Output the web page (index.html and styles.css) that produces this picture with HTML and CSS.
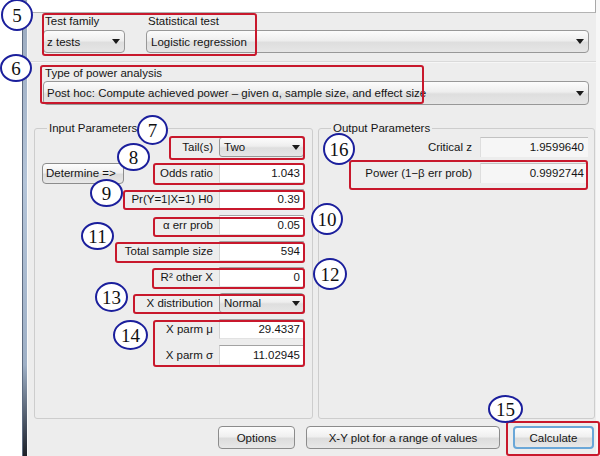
FILE: index.html
```html
<!DOCTYPE html>
<html>
<head>
<meta charset="utf-8">
<link rel="stylesheet" href="styles.css">
</head>
<body>
<div class="screen">
  <div class="gutter"></div>
  <div class="frame"></div>
  <div class="main">
    <div class="topband"></div>
    <div class="panel panel-a">
      <div class="col col-family">
        <div class="lbl">Test family</div>
        <div class="select"><span>z tests</span><span class="arrow"></span></div>
      </div>
      <div class="col col-test">
        <div class="lbl">Statistical test</div>
        <div class="select"><span>Logistic regression</span><span class="arrow"></span></div>
      </div>
    </div>
    <div class="panel panel-b">
      <div class="lbl">Type of power analysis</div>
      <div class="select select-big"><span>Post hoc: Compute achieved power – given α, sample size, and effect size</span><span class="arrow"></span></div>
    </div>
    <div class="groups">
      <fieldset class="group group-input">
        <legend>Input Parameters</legend>
        <div class="rows">
          <div class="row"><span class="rlabel">Tail(s)</span><div class="select small"><span>Two</span><span class="arrow"></span></div></div>
          <div class="row row-split">
            <button class="btn btn-determine">Determine =&gt;</button>
            <div class="pair"><span class="rlabel">Odds ratio</span><div class="input">1.043</div></div>
          </div>
          <div class="row"><span class="rlabel">Pr(Y=1|X=1) H0</span><div class="input">0.39</div></div>
          <div class="row"><span class="rlabel">α err prob</span><div class="input">0.05</div></div>
          <div class="row"><span class="rlabel">Total sample size</span><div class="input">594</div></div>
          <div class="row"><span class="rlabel">R² other X</span><div class="input">0</div></div>
          <div class="row"><span class="rlabel">X distribution</span><div class="select small"><span>Normal</span><span class="arrow"></span></div></div>
          <div class="row"><span class="rlabel">X parm μ</span><div class="input">29.4337</div></div>
          <div class="row"><span class="rlabel">X parm σ</span><div class="input">11.02945</div></div>
        </div>
      </fieldset>
      <fieldset class="group group-output">
        <legend>Output Parameters</legend>
        <div class="rows">
          <div class="row"><span class="rlabel">Critical z</span><div class="output">1.9599640</div></div>
          <div class="row"><span class="rlabel">Power (1−β err prob)</span><div class="output">0.9992744</div></div>
        </div>
      </fieldset>
    </div>
    <div class="buttons">
      <button class="btn btn-options">Options</button>
      <button class="btn btn-plot">X-Y plot for a range of values</button>
      <button class="btn btn-calc">Calculate</button>
    </div>
  </div>
  <div class="edge"></div>

  <div class="annot">
    <div class="box b-a"></div>
    <div class="box b-b"></div>
    <div class="box b-tail"></div>
    <div class="box b-odds"></div>
    <div class="box b-pr"></div>
    <div class="box b-alpha"></div>
    <div class="box b-total"></div>
    <div class="box b-r2"></div>
    <div class="box b-xdist"></div>
    <div class="box b-parm"></div>
    <div class="box b-power"></div>
    <div class="box b-calc"></div>

    <div class="ring r5">5</div>
    <div class="ring r6">6</div>
    <div class="ring r7">7</div>
    <div class="ring r8">8</div>
    <div class="ring r9">9</div>
    <div class="ring r10">10</div>
    <div class="ring r11">11</div>
    <div class="ring r12">12</div>
    <div class="ring r13">13</div>
    <div class="ring r14">14</div>
    <div class="ring r15">15</div>
    <div class="ring r16">16</div>
  </div>
</div>
</body>
</html>
```

FILE: styles.css
```css
* { box-sizing: border-box; }
html, body { margin: 0; padding: 0; }
body {
  width: 600px;
  height: 456px;
  overflow: hidden;
  background: #fff;
  font-family: "Liberation Sans", Arial, sans-serif;
  font-size: 11.5px;
  color: #151515;
}
.screen { position: relative; display: flex; width: 600px; height: 456px; }
.gutter { width: 22px; background: #fff; }
.frame {
  width: 5px;
  border-left: 1px solid #5d6b80;
  background: linear-gradient(to bottom, #9aa9bd 0%, #b4c4d8 40%, #9fb0c6 80%, #3a4250 95%, #1c1f26 100%);
}
.main {
  width: 569px;
  display: flex;
  flex-direction: column;
  background: #ededed;
  border-left: 1px solid #f8f8f8;
}
.edge { width: 4px; background: #f7f7f7; }

.topband {
  height: 13px;
  background: #fff;
  border-bottom: 1px solid #b3b3b3;
  border-right: 1px solid #a8a8a8;
  margin-right: 0;
}

.panel-a {
  height: 49px;
  display: flex;
  gap: 21px;
  padding: 2px 7px 0 15px;
  border-bottom: 1px solid #dadada;
}
.col { display: flex; flex-direction: column; gap: 2px; }
.col-family { width: 82px; }
.col-test { flex: 1; }
.lbl { height: 13px; line-height: 13px; padding-left: 2px; white-space: nowrap; }

.select {
  height: 23px;
  display: flex;
  align-items: center;
  justify-content: space-between;
  padding: 0 4px 0 3px;
  border: 1px solid #989898;
  border-radius: 4px;
  background: linear-gradient(to bottom, #fcfcfc 0%, #eeeeee 45%, #dedede 55%, #e6e6e6 100%);
  white-space: nowrap;
}
.col-test .select { padding-left: 4px; }
.arrow {
  width: 0;
  height: 0;
  border-left: 4px solid transparent;
  border-right: 4px solid transparent;
  border-top: 5px solid #1a1a1a;
  flex: none;
}

.panel-b {
  height: 50px;
  padding: 4px 7px 0 15px;
  display: flex;
  flex-direction: column;
  gap: 1px;
  border-top: 1px solid #f6f6f6;
}
.panel-b .select { height: 24px; }

.groups {
  height: 307px;
  display: flex;
  gap: 5px;
  padding: 10px 0 0 6px;
}
.group {
  margin: 0;
  border: 1px solid #cdcdcd;
  border-radius: 3px;
  min-width: 0;
}
.group legend { padding: 0 2px; margin-left: 5px; line-height: 13px; }
.group-input { width: 279px; padding: 0 8px 0 7px; }
.group-output { width: 277px; padding: 0 6px 0 7px; }

.rows { display: flex; flex-direction: column; gap: 6px; padding-top: 2px; }
.row {
  height: 20px;
  display: flex;
  justify-content: flex-end;
  align-items: center;
  white-space: nowrap;
}
.row-split { justify-content: space-between; }
.pair { display: flex; align-items: center; }
.rlabel { margin-right: 6px; }
.group-output .rlabel { margin-right: 8px; }

.input {
  width: 85px;
  height: 20px;
  line-height: 18px;
  background: #fff;
  border-top: 1px solid #a3a3a3;
  border-left: 1px solid #d2d2d2;
  border-right: 1px solid #d2d2d2;
  border-bottom: 1px solid #e2e2e2;
  text-align: right;
  padding-right: 3px;
}
.select.small { width: 85px; height: 20px; border-radius: 3px; padding: 0 3px 0 4px; }

.output {
  width: 108px;
  height: 20px;
  line-height: 18px;
  background: #f6f6f6;
  border-top: 1px solid #c2c2c2;
  border-left: 1px solid #dedede;
  text-align: right;
  padding-right: 4px;
}

.btn {
  height: 23px;
  margin: 0;
  padding: 0;
  font-family: inherit;
  font-size: 11.5px;
  color: #151515;
  border: 1px solid #8c8c8c;
  border-radius: 4px;
  background: linear-gradient(to bottom, #fdfdfd 0%, #f0f0f0 45%, #dcdcdc 55%, #e8e8e8 100%);
  text-align: center;
}
.btn-determine { width: 82px; height: 21px; text-align: left; padding-left: 3px; }

.buttons {
  height: 36px;
  display: flex;
  justify-content: flex-end;
  align-items: flex-start;
  gap: 11px;
  padding: 7px 2px 0 0;
}
.btn-options { width: 77px; }
.btn-plot { width: 194px; }
.btn-calc { width: 81px; margin-left: 2px; border: 2px solid #6aa7d8; }

.annot { position: absolute; left: 0; top: 0; width: 600px; height: 456px; pointer-events: none; }
.box { position: absolute; border: 2px solid #c8182c; border-radius: 3px; }
.b-a { left: 42px; top: 13px; width: 215px; height: 43px; }
.b-b { left: 40px; top: 65px; width: 384px; height: 39px; }
.b-tail { left: 169px; top: 136px; width: 136px; height: 24px; }
.b-odds { left: 153px; top: 163px; width: 152px; height: 22px; }
.b-pr { left: 123px; top: 190px; width: 182px; height: 20px; }
.b-alpha { left: 153px; top: 217px; width: 152px; height: 20px; }
.b-total { left: 115px; top: 242px; width: 190px; height: 21px; }
.b-r2 { left: 152px; top: 268px; width: 153px; height: 21px; }
.b-xdist { left: 133px; top: 294px; width: 172px; height: 20px; }
.b-parm { left: 153px; top: 320px; width: 152px; height: 47px; }
.b-power { left: 349px; top: 160px; width: 239px; height: 30px; }
.b-calc { left: 506px; top: 421px; width: 94px; height: 35px; }

.ring {
  position: absolute;
  width: 32px;
  height: 30px;
  border: 2px solid #1b1f9c;
  border-radius: 50%;
  background: #fff;
  display: flex;
  align-items: center;
  justify-content: center;
  font-family: "Liberation Serif", "Times New Roman", serif;
  font-size: 19px;
  line-height: 1;
  color: #111;
}
.r5 { left: 1px; top: -1px; width: 32px; height: 32px; }
.r6 { left: 0px; top: 54px; width: 32px; height: 28px; }
.r7 { left: 137px; top: 115px; width: 31px; height: 30px; }
.r8 { left: 117px; top: 143px; width: 33px; height: 28px; }
.r9 { left: 90px; top: 179px; width: 33px; height: 28px; }
.r10 { left: 311px; top: 203px; width: 32px; height: 32px; }
.r11 { left: 81px; top: 222px; width: 33px; height: 28px; }
.r12 { left: 313px; top: 258px; width: 34px; height: 32px; }
.r13 { left: 95px; top: 282px; width: 33px; height: 30px; }
.r14 { left: 113px; top: 320px; width: 35px; height: 30px; }
.r15 { left: 488px; top: 395px; width: 35px; height: 28px; }
.r16 { left: 323px; top: 133px; width: 32px; height: 32px; }
```
